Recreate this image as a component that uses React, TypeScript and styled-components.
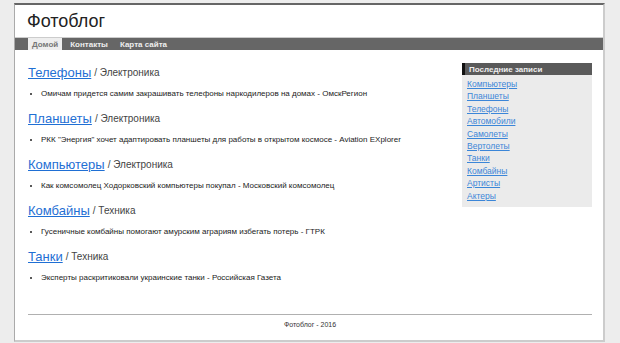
import styled, { createGlobalStyle } from 'styled-components';

const GlobalStyle = createGlobalStyle`
  body {
    margin: 0;
    background-color: #ededed;
    font-family: "Liberation Sans", Arial, sans-serif;
  }
`;

const Page = styled.div`
  padding-top: 3px;
  margin-left: 14px;
  width: 591px;
`;

const Container = styled.div`
  background-color: #fff;
  border-top: 2px solid #666;
  border-left: 1px solid #aaa;
  border-right: 2px solid #ccc;
  border-bottom: 2px solid #ccc;
`;

const Header = styled.div`
  height: 32px;
  display: flex;
  align-items: center;
  padding-left: 12px;
  border-bottom: 1px solid #ccc;
`;

const Title = styled.h1`
  margin: 0;
  font-size: 18px;
  font-weight: normal;
  color: #222;
`;

const Nav = styled.div`
  height: 12px;
  background-color: #666;
  display: flex;
  padding-left: 13px;
`;

const NavItem = styled.a<{ $active?: boolean }>`
  display: flex;
  align-items: center;
  padding: 0 4px;
  margin-right: 4px;
  font-size: 8px;
  font-weight: bold;
  text-decoration: none;
  background-color: ${(p) => (p.$active ? '#eee' : 'transparent')};
  color: ${(p) => (p.$active ? '#777' : '#eee')};
`;

const Content = styled.div`
  display: flex;
  gap: 22px;
  padding: 12px 11px 22px 13px;
`;

const Main = styled.div`
  flex: 1;
`;

const Section = styled.div`
  margin-bottom: 8px;
`;

const Heading = styled.div`
  height: 20px;
  display: flex;
  align-items: center;
  white-space: nowrap;
`;

const HeadingLink = styled.a`
  font-size: 13px;
  color: #1f6fd4;
  text-decoration: underline;
`;

const Category = styled.span`
  font-size: 10px;
  color: #444;
  margin-left: 3px;
`;

const List = styled.ul`
  margin: 6px 0 0 0;
  padding-left: 13px;
`;

const Item = styled.li`
  font-size: 8px;
  line-height: 12px;
  color: #222;
  white-space: nowrap;
`;

const Sidebar = styled.div`
  width: 130px;
  margin-top: 1px;
  align-self: flex-start;
  background-color: #ebebeb;
  padding-bottom: 5px;
`;

const SidebarTitle = styled.div`
  height: 12px;
  display: flex;
  align-items: center;
  background-color: #5a5a5a;
  border-left: 3px solid #111;
  padding-left: 4px;
  color: #eee;
  font-size: 8px;
  font-weight: bold;
`;

const SidebarList = styled.div`
  display: flex;
  flex-direction: column;
  padding: 3px 0 0 5px;
`;

const SidebarLink = styled.a`
  font-size: 8.5px;
  line-height: 12.4px;
  color: #3b86d8;
  text-decoration: underline;
  align-self: flex-start;
`;

const Footer = styled.div`
  margin: 0 11px 0 13px;
  border-top: 1px solid #b0b0b0;
  padding: 5px 0 10px;
  text-align: center;
  font-size: 7px;
  line-height: 10px;
  color: #333;
`;

const posts = [
  {
    title: 'Телефоны',
    category: 'Электроника',
    item: 'Омичам придется самим закрашивать телефоны наркодилеров на домах - ОмскРегион',
  },
  {
    title: 'Планшеты',
    category: 'Электроника',
    item: 'РКК "Энергия" хочет адаптировать планшеты для работы в открытом космосе - Aviation EXplorer',
  },
  {
    title: 'Компьютеры',
    category: 'Электроника',
    item: 'Как комсомолец Ходорковский компьютеры покупал - Московский комсомолец',
  },
  {
    title: 'Комбайны',
    category: 'Техника',
    item: 'Гусеничные комбайны помогают амурским аграриям избегать потерь - ГТРК',
  },
  {
    title: 'Танки',
    category: 'Техника',
    item: 'Эксперты раскритиковали украинские танки - Российская Газета',
  },
];

const recent = [
  'Компьютеры',
  'Планшеты',
  'Телефоны',
  'Автомобили',
  'Самолеты',
  'Вертолеты',
  'Танки',
  'Комбайны',
  'Артисты',
  'Актеры',
];

export default function App() {
  return (
    <Page>
      <GlobalStyle />
      <Container>
        <Header>
          <Title>Фотоблог</Title>
        </Header>
        <Nav>
          <NavItem $active>Домой</NavItem>
          <NavItem>Контакты</NavItem>
          <NavItem>Карта сайта</NavItem>
        </Nav>
        <Content>
          <Main>
            {posts.map((post) => (
              <Section key={post.title}>
                <Heading>
                  <HeadingLink href="#">{post.title}</HeadingLink>
                  <Category>/ {post.category}</Category>
                </Heading>
                <List>
                  <Item>{post.item}</Item>
                </List>
              </Section>
            ))}
          </Main>
          <Sidebar>
            <SidebarTitle>Последние записи</SidebarTitle>
            <SidebarList>
              {recent.map((name) => (
                <SidebarLink key={name} href="#">
                  {name}
                </SidebarLink>
              ))}
            </SidebarList>
          </Sidebar>
        </Content>
        <Footer>Фотоблог - 2016</Footer>
      </Container>
    </Page>
  );
}
